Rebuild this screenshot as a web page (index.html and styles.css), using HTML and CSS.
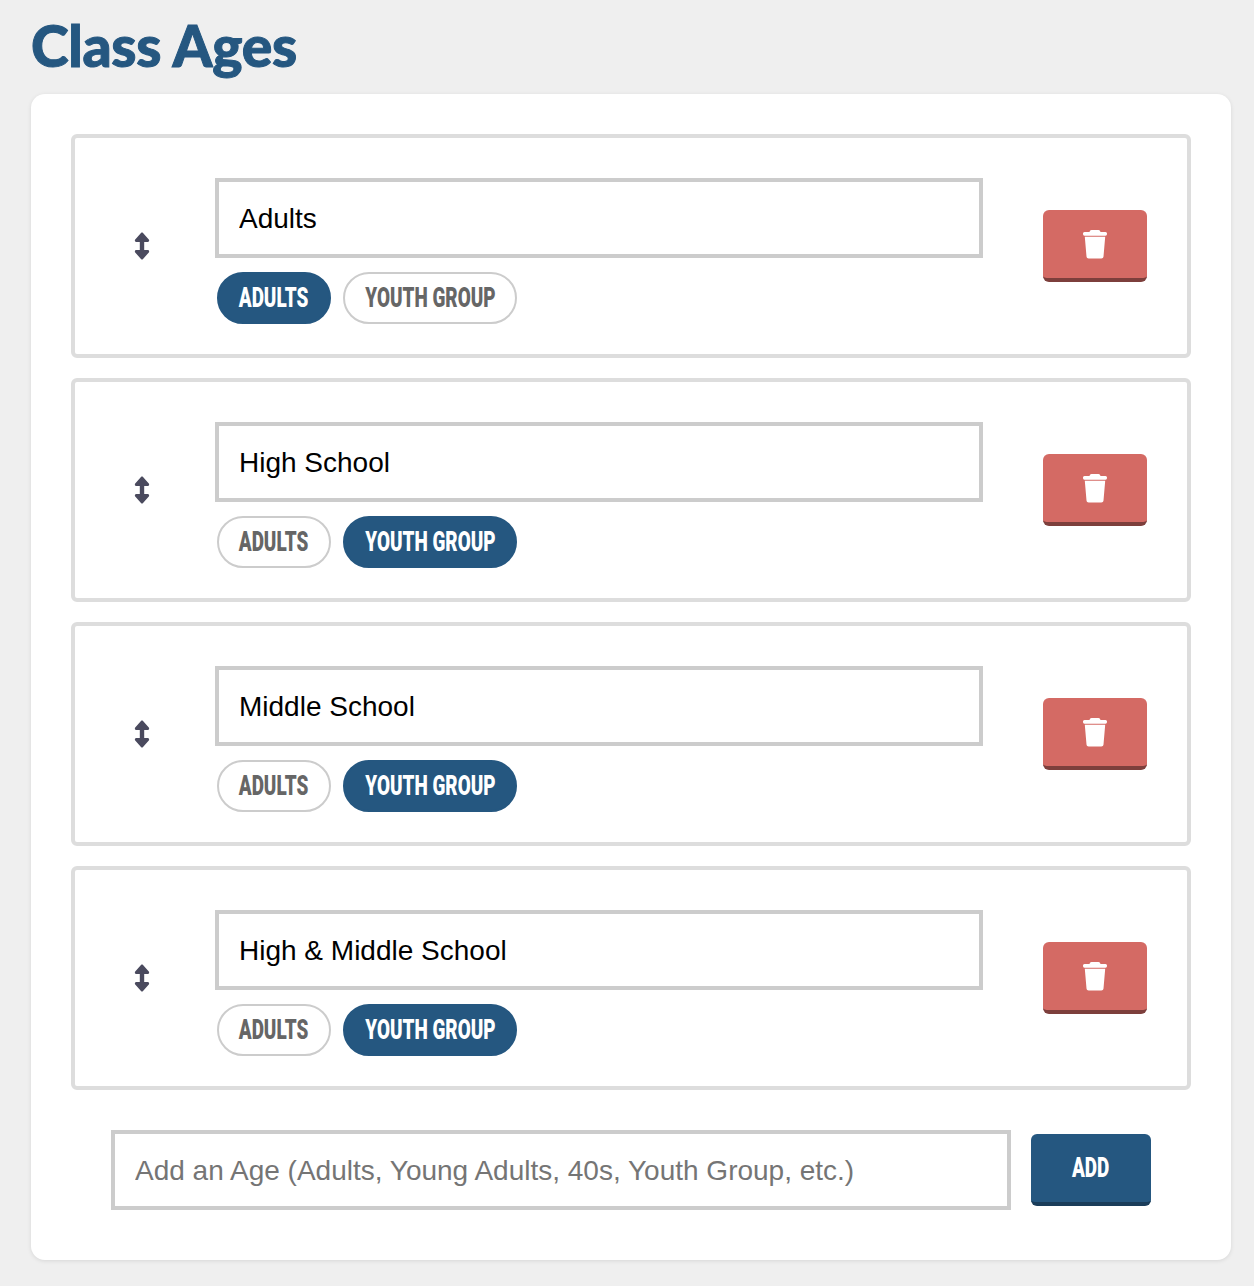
FILE: index.html
```html
<!DOCTYPE html>
<html lang="en">
<head>
    <meta charset="UTF-8">
    <meta name="viewport" content="width=device-width, initial-scale=1.0">
    <title>Class Ages</title>
    <link rel="stylesheet" href="styles.css">
</head>
<body>
    <h1 class="page-title">Class Ages</h1>
    <main class="card">
        <div class="age-row">
            <div class="handle">
                <svg width="16" height="28" viewBox="0 0 16 28"><path d="M7.200 0.800C7.600 0.400 8.400 0.400 8.800 0.800L14.800 7.500C15.600 8.500 15 10 13.800 10H10.200V18H13.800C15 18 15.600 19.500 14.800 20.500L8.800 27.200C8.400 27.600 7.600 27.600 7.200 27.200L1.200 20.500C0.400 19.500 1 18 2.200 18H5.800V10H2.200C1 10 0.400 8.500 1.200 7.500Z"/></svg>
            </div>
            <div class="age-main">
                <input class="text-input" type="text" value="Adults">
                <div class="pills">
                    <span class="pill pill-adults pill-active"><span class="pill-text">ADULTS</span></span>
                    <span class="pill pill-youth"><span class="pill-text">YOUTH GROUP</span></span>
                </div>
            </div>
            <button class="btn btn-delete">
                <svg width="24" height="29" viewBox="0 0 24 29"><path d="M6.500 2C6.800 0.700 7.500 0 8.500 0H15.500C16.500 0 17.200 0.700 17.500 2H22.500C23.400 2 24 2.800 24 3.800S23.400 5.800 22.500 5.800H1.500C0.600 5.800 0 4.800 0 3.800S0.600 2 1.500 2ZM1.800 6.800H22.200L20.500 26.500C20.400 27.800 19.500 28.500 18.300 28.500H5.700C4.500 28.500 3.600 27.800 3.500 26.500Z"/></svg>
            </button>
        </div>
        <div class="age-row">
            <div class="handle">
                <svg width="16" height="28" viewBox="0 0 16 28"><path d="M7.200 0.800C7.600 0.400 8.400 0.400 8.800 0.800L14.800 7.500C15.600 8.500 15 10 13.800 10H10.200V18H13.800C15 18 15.600 19.500 14.800 20.500L8.800 27.200C8.400 27.600 7.600 27.600 7.200 27.200L1.200 20.500C0.400 19.500 1 18 2.200 18H5.800V10H2.200C1 10 0.400 8.500 1.200 7.500Z"/></svg>
            </div>
            <div class="age-main">
                <input class="text-input" type="text" value="High School">
                <div class="pills">
                    <span class="pill pill-adults"><span class="pill-text">ADULTS</span></span>
                    <span class="pill pill-youth pill-active"><span class="pill-text">YOUTH GROUP</span></span>
                </div>
            </div>
            <button class="btn btn-delete">
                <svg width="24" height="29" viewBox="0 0 24 29"><path d="M6.500 2C6.800 0.700 7.500 0 8.500 0H15.500C16.500 0 17.200 0.700 17.500 2H22.500C23.400 2 24 2.800 24 3.800S23.400 5.800 22.500 5.800H1.500C0.600 5.800 0 4.800 0 3.800S0.600 2 1.500 2ZM1.800 6.800H22.200L20.500 26.500C20.400 27.800 19.500 28.500 18.300 28.500H5.700C4.500 28.500 3.600 27.800 3.500 26.500Z"/></svg>
            </button>
        </div>
        <div class="age-row">
            <div class="handle">
                <svg width="16" height="28" viewBox="0 0 16 28"><path d="M7.200 0.800C7.600 0.400 8.400 0.400 8.800 0.800L14.800 7.500C15.600 8.500 15 10 13.800 10H10.200V18H13.800C15 18 15.600 19.500 14.800 20.500L8.800 27.200C8.400 27.600 7.600 27.600 7.200 27.200L1.200 20.500C0.400 19.500 1 18 2.200 18H5.800V10H2.200C1 10 0.400 8.500 1.200 7.500Z"/></svg>
            </div>
            <div class="age-main">
                <input class="text-input" type="text" value="Middle School">
                <div class="pills">
                    <span class="pill pill-adults"><span class="pill-text">ADULTS</span></span>
                    <span class="pill pill-youth pill-active"><span class="pill-text">YOUTH GROUP</span></span>
                </div>
            </div>
            <button class="btn btn-delete">
                <svg width="24" height="29" viewBox="0 0 24 29"><path d="M6.500 2C6.800 0.700 7.500 0 8.500 0H15.500C16.500 0 17.200 0.700 17.500 2H22.500C23.400 2 24 2.800 24 3.800S23.400 5.800 22.500 5.800H1.500C0.600 5.800 0 4.800 0 3.800S0.600 2 1.500 2ZM1.800 6.800H22.200L20.500 26.500C20.400 27.800 19.500 28.500 18.300 28.500H5.700C4.500 28.500 3.600 27.800 3.500 26.500Z"/></svg>
            </button>
        </div>
        <div class="age-row">
            <div class="handle">
                <svg width="16" height="28" viewBox="0 0 16 28"><path d="M7.200 0.800C7.600 0.400 8.400 0.400 8.800 0.800L14.800 7.500C15.600 8.500 15 10 13.800 10H10.200V18H13.800C15 18 15.600 19.500 14.800 20.500L8.800 27.200C8.400 27.600 7.600 27.600 7.200 27.200L1.200 20.500C0.400 19.500 1 18 2.200 18H5.800V10H2.200C1 10 0.400 8.500 1.200 7.500Z"/></svg>
            </div>
            <div class="age-main">
                <input class="text-input" type="text" value="High &amp; Middle School">
                <div class="pills">
                    <span class="pill pill-adults"><span class="pill-text">ADULTS</span></span>
                    <span class="pill pill-youth pill-active"><span class="pill-text">YOUTH GROUP</span></span>
                </div>
            </div>
            <button class="btn btn-delete">
                <svg width="24" height="29" viewBox="0 0 24 29"><path d="M6.500 2C6.800 0.700 7.500 0 8.500 0H15.500C16.500 0 17.200 0.700 17.500 2H22.500C23.400 2 24 2.800 24 3.800S23.400 5.800 22.500 5.800H1.500C0.600 5.800 0 4.800 0 3.800S0.600 2 1.500 2ZM1.800 6.800H22.200L20.500 26.500C20.400 27.800 19.500 28.500 18.300 28.500H5.700C4.500 28.500 3.600 27.800 3.500 26.500Z"/></svg>
            </button>
        </div>
        <div class="add-row">
            <input class="text-input" type="text" placeholder="Add an Age (Adults, Young Adults, 40s, Youth Group, etc.)">
            <button class="btn btn-add"><span class="pill-text">ADD</span></button>
        </div>
    </main>
</body>
</html>
```

FILE: styles.css
```css
* {
    box-sizing: border-box;
}

body {
    margin: 0;
    padding: 0 23px 26px 31px;
    background-color: #efefef;
    font-family: "Liberation Sans", Arial, sans-serif;
}

.page-title {
    margin: 0;
    height: 94px;
    font-family: Lato, sans-serif;
    font-weight: 900;
    font-size: 57px;
    line-height: 90px;
    letter-spacing: -0.3px;
    -webkit-text-stroke: 1px #255780;
    color: #255780;
}

.card {
    padding: 40px 40px 50px;
    background-color: #fff;
    border-radius: 14px;
    box-shadow: 0 1px 4px rgba(0, 0, 0, 0.1);
}

.age-row {
    display: flex;
    align-items: center;
    height: 224px;
    padding: 0 40px;
    margin-bottom: 20px;
    border: 4px solid #ddd;
    border-radius: 6px;
}

.handle {
    display: flex;
    justify-content: center;
    width: 54px;
    margin-right: 46px;
}

.handle svg {
    fill: #4a4a5e;
}

.age-main {
    flex: 1;
    padding: 40px 0 30px;
    margin-right: 60px;
}

.text-input {
    display: block;
    width: 100%;
    height: 80px;
    padding: 2px 20px 0;
    border: 4px solid #ccc;
    border-radius: 0;
    outline: none;
    background: #fff;
    font-family: "Liberation Sans", Arial, sans-serif;
    font-size: 28px;
    color: #000;
}

.text-input::placeholder {
    color: #757575;
    opacity: 1;
}

.pills {
    display: flex;
    gap: 12px;
    margin: 14px 0 0 2px;
}

.pill {
    display: flex;
    align-items: center;
    justify-content: center;
    height: 52px;
    padding-bottom: 2px;
    border: 2px solid #ccc;
    border-radius: 26px;
    color: #666;
}

.pill-adults {
    width: 114px;
}

.pill-youth {
    width: 174px;
}

.pill-active {
    border-color: #255780;
    background-color: #255780;
    color: #fff;
}

/* no condensed face is installed, so the bold is squeezed */
.pill-text {
    display: inline-block;
    font-family: Roboto, sans-serif;
    font-weight: 900;
    font-size: 28px;
    white-space: nowrap;
    transform: scaleX(0.675);
}

.btn {
    display: flex;
    align-items: center;
    justify-content: center;
    padding: 0;
    border: none;
    border-radius: 6px;
    color: #fff;
}

.btn-delete {
    width: 104px;
    height: 72px;
    background-color: #d46a64;
    border-bottom: 4px solid #7d3f3c;
}

.btn-delete svg {
    fill: #fff;
}

.add-row {
    display: flex;
    align-items: center;
    gap: 20px;
    margin: 40px 40px 0;
}

.add-row .text-input {
    flex: 1;
}

.btn-add {
    width: 120px;
    height: 72px;
    padding-bottom: 2px;
    background-color: #255780;
    border-bottom: 4px solid #1a3d5a;
}
```
